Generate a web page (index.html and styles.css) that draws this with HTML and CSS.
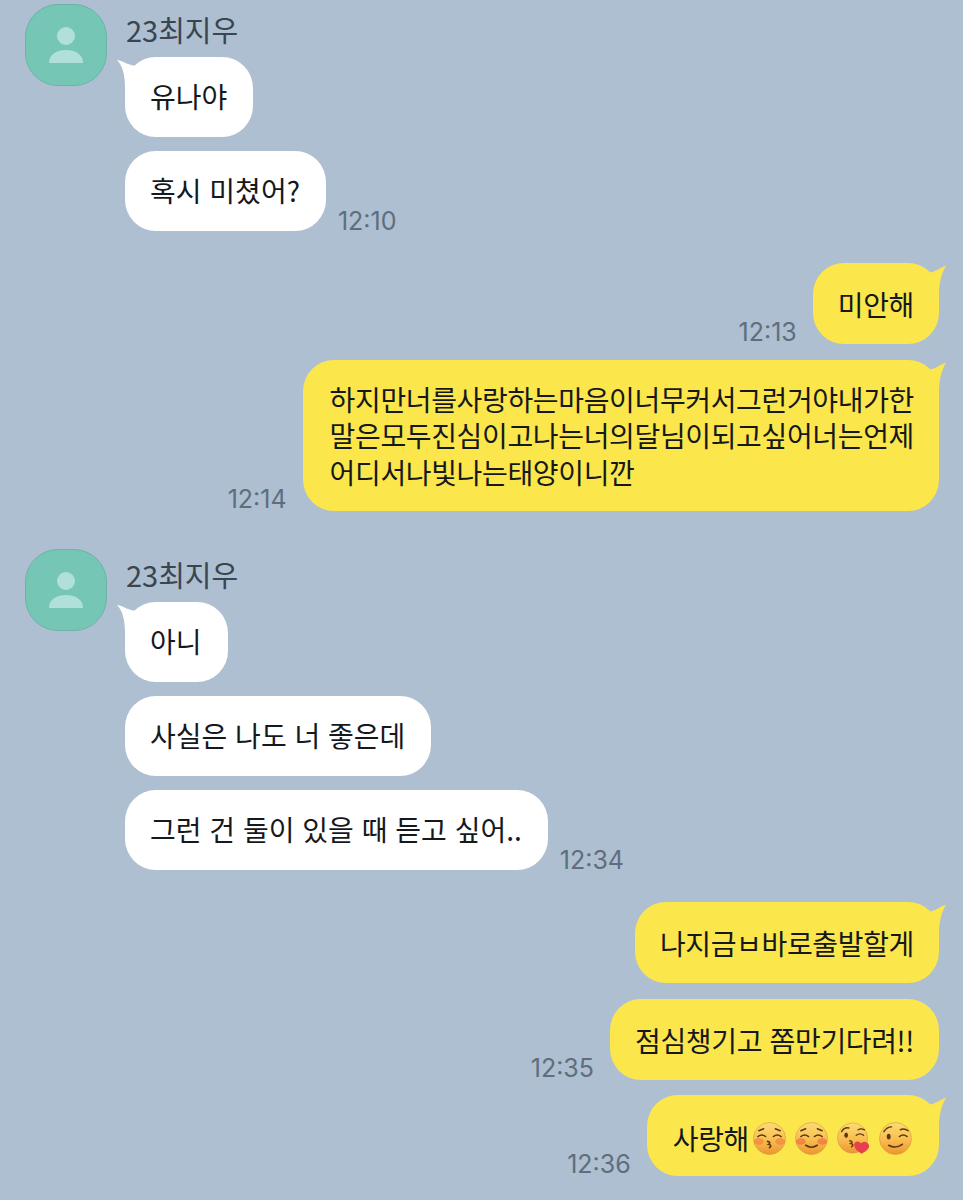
FILE: index.html
```html
<!DOCTYPE html>
<html lang="ko">
<head>
  <meta charset="UTF-8" />
  <meta name="viewport" content="width=device-width, initial-scale=1.0" />
  <title>23최지우</title>
  <link rel="stylesheet" href="styles.css">
</head>
<body>
  <svg class="defs" width="0" height="0">
    <defs>
      <linearGradient id="faceFill" x1="0" y1="0" x2="0" y2="1">
        <stop offset="0%" stop-color="#fcdc74" />
        <stop offset="55%" stop-color="#f8bd4e" />
        <stop offset="100%" stop-color="#ec9532" />
      </linearGradient>
      <symbol id="avatarPerson" viewBox="0 0 36 36">
        <circle cx="18" cy="9" r="9" />
        <path d="M1 36c0-9 8-13 17-13s17 4 17 13z" />
      </symbol>
      <symbol id="emojiKiss" viewBox="0 0 34 34">
        <circle cx="17" cy="17" r="16.500" fill="url(#faceFill)" stroke="#d9963c" stroke-width=".6" />
        <ellipse cx="6" cy="20" rx="5" ry="3.500" fill="#ef6d3e" opacity=".5" />
        <ellipse cx="28" cy="20" rx="5" ry="3.500" fill="#ef6d3e" opacity=".5" />
        <path d="M5 15q4-3 8 0M21 15q4-3 8 0M6 9l5-2M23 7l5 2" fill="none" stroke="#5c3513" stroke-width="1.500" stroke-linecap="round" />
        <path d="M15 20q4 1 1 3q4 1 1 3.500" fill="none" stroke="#5c3513" stroke-width="1.700" stroke-linecap="round" />
      </symbol>
      <symbol id="emojiSmile" viewBox="0 0 34 34">
        <circle cx="17" cy="17" r="16.500" fill="url(#faceFill)" stroke="#d9963c" stroke-width=".6" />
        <ellipse cx="6" cy="20" rx="5" ry="3.500" fill="#ef5d3e" opacity=".55" />
        <ellipse cx="28" cy="20" rx="5" ry="3.500" fill="#ef5d3e" opacity=".55" />
        <path d="M6 15q4-3 8 0M20 15q4-3 8 0M6 9l5-2M23 7l5 2" fill="none" stroke="#5c3513" stroke-width="1.500" stroke-linecap="round" />
        <path d="M11 24q6 4 12 0" fill="none" stroke="#5c3513" stroke-width="1.700" stroke-linecap="round" />
      </symbol>
      <symbol id="emojiHeart" viewBox="0 0 36 35">
        <circle cx="17" cy="17" r="16.500" fill="url(#faceFill)" stroke="#d9963c" stroke-width=".6" />
        <path d="M5 10q3-5 8-4M21 14q4-3 8 0M23 8q3-2 7 0" fill="none" stroke="#5c3513" stroke-width="1.500" stroke-linecap="round" />
        <ellipse cx="10" cy="14" rx="2" ry="3" fill="#5c3513" />
        <path d="M14 20q4 1 1 3q4 1 1 3.500" fill="none" stroke="#5c3513" stroke-width="1.700" stroke-linecap="round" />
        <path d="M27 34c-6-3-9-7-8-11c1-3 6-3 7 0c2-3 9-2 9 3c0 3-4 6-8 8z" fill="#e83f4e" />
      </symbol>
      <symbol id="emojiWink" viewBox="0 0 34 34">
        <circle cx="17" cy="17" r="16.500" fill="url(#faceFill)" stroke="#d9963c" stroke-width=".6" />
        <path d="M5 10q3-5 8-5M21 15q4-3 8 0M22 8q4-2 8 1" fill="none" stroke="#5c3513" stroke-width="1.500" stroke-linecap="round" />
        <ellipse cx="10" cy="15" rx="2" ry="3" fill="#5c3513" />
        <path d="M10 24q7 4 14-1" fill="none" stroke="#5c3513" stroke-width="1.700" stroke-linecap="round" />
      </symbol>
      <symbol id="tailLeft" viewBox="0 0 22 28">
        <path d="M0 0c7 1 11 6 22 6v22H8C8 16 6 6 0 0z" />
      </symbol>
      <symbol id="tailRight" viewBox="0 0 22 30">
        <path d="M22 0c-7 1-11 8-22 7v23h15c0-12 2-22 7-30z" />
      </symbol>
    </defs>
  </svg>

  <main class="chat">
    <section class="group group-first">
      <div class="avatar">
        <svg class="avatar-icon"><use href="#avatarPerson" /></svg>
      </div>
      <div class="group-body">
        <div class="name">23최지우</div>
        <div class="row">
          <div class="bubble bubble-in">
            <svg class="tail tail-in"><use href="#tailLeft" /></svg>
            유나야
          </div>
        </div>
        <div class="row">
          <div class="bubble bubble-in">혹시 미쳤어?</div>
          <span class="time time-in">12:10</span>
        </div>
      </div>
    </section>

    <section class="mine mine-one">
      <div class="row row-mine">
        <span class="time">12:13</span>
        <div class="bubble bubble-out">
          <svg class="tail tail-out"><use href="#tailRight" /></svg>
          미안해
        </div>
      </div>
      <div class="row row-mine">
        <span class="time">12:14</span>
        <div class="bubble bubble-out bubble-long">
          <svg class="tail tail-out"><use href="#tailRight" /></svg>
          하지만너를사랑하는마음이너무커서그런거야내가한<br>말은모두진심이고나는너의달님이되고싶어너는언제<br>어디서나빛나는태양이니깐
        </div>
      </div>
    </section>

    <section class="group group-second">
      <div class="avatar">
        <svg class="avatar-icon"><use href="#avatarPerson" /></svg>
      </div>
      <div class="group-body">
        <div class="name">23최지우</div>
        <div class="row">
          <div class="bubble bubble-in">
            <svg class="tail tail-in"><use href="#tailLeft" /></svg>
            아니
          </div>
        </div>
        <div class="row">
          <div class="bubble bubble-in">사실은 나도 너 좋은데</div>
        </div>
        <div class="row">
          <div class="bubble bubble-in">그런 건 둘이 있을 때 듣고 싶어..</div>
          <span class="time time-in">12:34</span>
        </div>
      </div>
    </section>

    <section class="mine mine-two">
      <div class="row row-mine">
        <div class="bubble bubble-out">
          <svg class="tail tail-out"><use href="#tailRight" /></svg>
          나지금ㅂ바로출발할게
        </div>
      </div>
      <div class="row row-mine">
        <span class="time">12:35</span>
        <div class="bubble bubble-out">점심챙기고 쫌만기다려!!</div>
      </div>
      <div class="row row-mine">
        <span class="time">12:36</span>
        <div class="bubble bubble-out bubble-emoji">
          <svg class="tail tail-out"><use href="#tailRight" /></svg>
          사랑해
          <span class="emojis">
            <svg class="emoji"><use href="#emojiKiss" /></svg>
            <svg class="emoji"><use href="#emojiSmile" /></svg>
            <svg class="emoji"><use href="#emojiHeart" /></svg>
            <svg class="emoji"><use href="#emojiWink" /></svg>
          </span>
        </div>
      </div>
    </section>
  </main>
</body>
</html>
```

FILE: styles.css
```css
html, body {
  margin: 0;
  padding: 0;
}
body {
  width: 963px;
  height: 1200px;
  overflow: hidden;
  background-color: #adbfd0;
  font-family: "Noto Sans CJK KR", "Noto Sans", sans-serif;
  color: #15181c;
}
.defs {
  display: block;
  height: 0;
}
.chat {
  display: flex;
  flex-direction: column;
}
.group {
  display: flex;
  gap: 18px;
  padding-left: 25px;
}
.group-first {
  margin-top: 4px;
}
.group-second {
  margin-top: 37.5px;
}
.avatar {
  flex: none;
  width: 82px;
  height: 82px;
  box-sizing: border-box;
  display: flex;
  align-items: center;
  justify-content: center;
  background: #76c6b6;
  border: 1px solid #6cb3a9;
  border-radius: 33px;
}
.avatar-icon {
  width: 36px;
  height: 36px;
  fill: #b1e0d8;
}
.group-body {
  display: flex;
  flex-direction: column;
  gap: 14px;
}
.name {
  height: 39px;
  padding-left: 1px;
  line-height: 51px;
  font-size: 29px;
  color: #3a4552;
}
.row {
  display: flex;
  align-items: flex-end;
}
.row-mine {
  justify-content: flex-end;
  gap: 16px;
}
.mine {
  display: flex;
  flex-direction: column;
  gap: 15.5px;
  padding-right: 24px;
}
.mine-one {
  margin-top: 32px;
}
.mine-two {
  margin-top: 32.5px;
}
.bubble {
  position: relative;
  box-sizing: border-box;
  height: 80px;
  padding: 21px 25px;
  border-radius: 31px;
  font-size: 28px;
  line-height: 36.5px;
  white-space: nowrap;
}
.bubble-in {
  padding-right: 26px;
  background: #fff;
  fill: #fff;
}
.bubble-out {
  height: 81px;
  padding-top: 23px;
  letter-spacing: -0.35px;
  background: #fbe64b;
  fill: #fbe64b;
}
.bubble-long {
  height: auto;
  padding: 21px 25px 21px 27px;
}
.bubble-emoji {
  display: flex;
  align-items: center;
  gap: 4px;
  padding-left: 26px;
  padding-right: 27px;
  padding-bottom: 17px;
}
.emojis {
  display: flex;
  gap: 9px;
}
.emoji {
  width: 33px;
  height: 33px;
}
.tail {
  position: absolute;
  top: 3px;
  width: 22px;
  height: 28px;
}
.tail-in {
  left: -8px;
}
.tail-out {
  right: -7px;
  height: 30px;
}
.time {
  font-family: Inter, "Liberation Sans", sans-serif;
  font-size: 25px;
  line-height: 20px;
  color: #5f6e7f;
  margin-bottom: 2px;
}
.time-in {
  margin-left: 12px;
  margin-bottom: 0;
}
```
